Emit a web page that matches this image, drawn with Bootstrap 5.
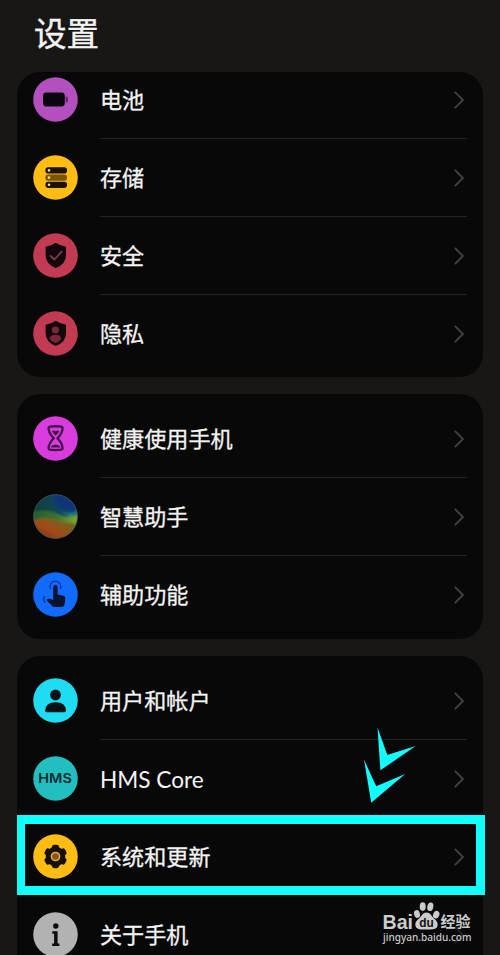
<!DOCTYPE html>
<html lang="zh-CN">
<head>
<meta charset="utf-8">
<meta name="viewport" content="width=device-width, initial-scale=1">
<title>设置</title>
<link href="https://cdn.jsdelivr.net/npm/bootstrap@5.3.0/dist/css/bootstrap.min.css" rel="stylesheet">
<style>
html, body { height: 955px; overflow: hidden; }
body { background: #181715; color: #f4f4f4; font-family: "Noto Sans CJK SC", sans-serif; }
.screen { height: 955px; overflow: hidden; padding: 0 17px; }
.page-title { height: 72px; padding: 8px 0 0 17px; font-size: 32.5px; line-height: 48px; font-weight: 400; -webkit-text-stroke: .4px; }
.panel { background: #080808; border-radius: 23px; overflow: hidden; margin-bottom: 17px; height: 245px; padding-top: 6px; }
.panel-cut { height: 305px; padding: 0; }
.panel-cut .entry:first-child { margin-top: -11px; }
.panel-last { height: 340px; border-radius: 23px 23px 0 0; overflow: visible; }
.entry { height: 78px; padding: 0 16px; color: inherit; }
.disc { width: 45px; height: 45px; flex: none; margin-bottom: 2px; }
.caption { margin-left: 22px; height: 100%; font-size: 22.1px; }
.caption span { padding-bottom: 2px; -webkit-text-stroke: .3px; }
.divided { border-bottom: 1px solid #222; padding-top: 1px; }
.arrow { width: 10px; height: 18px; margin-right: 3px; fill: none; stroke: #424242; stroke-width: 1.9; }
.target::after { content: ""; position: absolute; inset: -3px -2px 1px 0; border: 9px solid #12ffff; border-left-width: 8.5px; }
.pointer { position: absolute; left: 360px; top: 724px; }
.brand { position: absolute; left: 380px; top: 899px; }
.caption .latin { font-family: Lato, "Noto Sans CJK SC", sans-serif; font-size: 22.6px; padding-top: 1px; padding-bottom: 0; -webkit-text-stroke: 0; }
</style>
<script src="https://cdn.jsdelivr.net/npm/bootstrap@5.3.0/dist/js/bootstrap.bundle.min.js"></script>
</head>
<body>
<svg class="d-none"><symbol id="chev" viewBox="0 0 10 18"><path d="M.8.8 9 9 .8 17.2"/></symbol></svg>
<main class="screen position-relative">
<h1 class="page-title mb-0">设置</h1>

<section class="panel panel-cut">
  <div class="entry d-flex align-items-center">
    <svg class="disc" viewBox="0 0 45 45"><circle cx="22.5" cy="22.5" r="22.3" fill="#b44fc0"/><rect x="10" y="15.4" width="21.8" height="14" rx="3.4" fill="#0b060d"/><path d="M32.600 19.500h.8q1.500 0 1.500 1.500v3q0 1.500-1.500 1.500h-.8z" fill="#5e2a66"/></svg>
    <div class="caption divided d-flex flex-grow-1 align-items-center justify-content-between"><span>电池</span><svg class="arrow"><use href="#chev"/></svg></div>
  </div>
  <div class="entry d-flex align-items-center">
    <svg class="disc" viewBox="0 0 45 45"><circle cx="22.5" cy="22.5" r="22.3" fill="#ffbd13"/><g fill="#1b1205"><rect x="12.4" y="12.3" width="21.6" height="6.2" rx="2.8"/><rect x="12.4" y="19.5" width="21.6" height="6.2" rx="2.8" fill="#7c5309"/><rect x="12.4" y="26.7" width="21.6" height="6.2" rx="2.8"/></g><g fill="#ffd772"><circle cx="16" cy="15.4" r="1.3"/><circle cx="16" cy="22.6" r="1.3"/><circle cx="16" cy="29.8" r="1.3"/></g></svg>
    <div class="caption divided d-flex flex-grow-1 align-items-center justify-content-between"><span>存储</span><svg class="arrow"><use href="#chev"/></svg></div>
  </div>
  <div class="entry d-flex align-items-center">
    <svg class="disc" viewBox="0 0 45 45"><circle cx="22.5" cy="22.5" r="22.3" fill="#c23b52"/><path d="M22.800 9.800Q27.500 13 33 13.800v8.400q0 8.700-10.200 12.900Q12.600 30.900 12.600 22.200v-8.400Q18.100 13 22.800 9.800z" fill="#12070a"/><path d="m17 22.400 4.300 4.100 7.800-8.300" fill="none" stroke="#7c3a4c" stroke-width="1.800"/></svg>
    <div class="caption divided d-flex flex-grow-1 align-items-center justify-content-between"><span>安全</span><svg class="arrow"><use href="#chev"/></svg></div>
  </div>
  <div class="entry d-flex align-items-center">
    <svg class="disc" viewBox="0 0 45 45"><circle cx="22.5" cy="22.5" r="22.3" fill="#c23b52"/><path d="M22.800 9.800Q27.500 13 33 13.800v8.400q0 8.700-10.200 12.900Q12.600 30.900 12.600 22.200v-8.400Q18.100 13 22.800 9.800z" fill="#12070a"/><circle cx="22.400" cy="19" r="3.600" fill="#7a2637"/><path d="M16.600 28q0-4.300 5.800-4.300t5.800 4.300q-1.800 2.800-5.600 4.300-4-1.500-6-4.300z" fill="#7a2637"/></svg>
    <div class="caption d-flex flex-grow-1 align-items-center justify-content-between"><span>隐私</span><svg class="arrow"><use href="#chev"/></svg></div>
  </div>
</section>

<section class="panel">
  <div class="entry d-flex align-items-center">
    <svg class="disc" viewBox="0 0 45 45"><circle cx="22.500" cy="22.500" r="22.300" fill="#d93cdc"/><path d="M17 10.700Q22.500 9.800 28.200 10.700q2 .4 1.200 2.600-.4 4.200-4.900 8.900 4.500 4.700 4.900 8.900.8 2.200-1.200 2.600-5.700.9-11.200 0-2-.4-1.300-2.600.5-4.200 5-8.900-4.500-4.700-5-8.900-.7-2.200 1.300-2.600z" fill="none" stroke="#45104c" stroke-width="2.300"/><path d="M19 15.200q1.800-1.200 3.600 0 1.900-1.200 3.700 0-.8 2.400-3.700 4.200-2.800-1.800-3.600-4.200zM17.800 31.500q.5-2.600 4.800-3.100 4.300.5 4.900 3.100z" fill="#45104c"/></svg>
    <div class="caption divided d-flex flex-grow-1 align-items-center justify-content-between"><span>健康使用手机</span><svg class="arrow"><use href="#chev"/></svg></div>
  </div>
  <div class="entry d-flex align-items-center">
    <svg class="disc" viewBox="0 0 45 45"><defs><clipPath id="orb"><circle cx="22.500" cy="22.500" r="22"/></clipPath><linearGradient id="sky" x1="0" y1=".3" x2="1" y2=".1"><stop offset="0" stop-color="#123f35"/><stop offset=".5" stop-color="#104559"/><stop offset="1" stop-color="#16308a"/></linearGradient><linearGradient id="leaf" x1="0" x2="1"><stop offset="0" stop-color="#1b5b35"/><stop offset=".5" stop-color="#3c7130"/><stop offset="1" stop-color="#87b02c"/></linearGradient><linearGradient id="earth" x1="0" y1="1" x2="1" y2="0"><stop offset="0" stop-color="#6a2d15"/><stop offset=".45" stop-color="#a44a18"/><stop offset="1" stop-color="#557524"/></linearGradient><filter id="soft"><feGaussianBlur stdDeviation="1"/></filter></defs><g clip-path="url(#orb)"><rect width="45" height="45" fill="url(#sky)"/><g filter="url(#soft)"><path d="M18 0h30v13Q34 18 27 13 18 8 22 0z" fill="#103578"/><path d="M-2 19Q12 13 25 20t22-6v32H-2z" fill="url(#leaf)"/><path d="M-2 28Q10 21 23 26t24 3v18H-2z" fill="url(#earth)"/><path d="M25 16q10 6 22-1v6q-10 4-22-5z" fill="#167c75"/></g></g><circle cx="22.500" cy="22.500" r="21.900" fill="none" stroke="#456166" stroke-width=".7"/></svg>
    <div class="caption divided d-flex flex-grow-1 align-items-center justify-content-between"><span>智慧助手</span><svg class="arrow"><use href="#chev"/></svg></div>
  </div>
  <div class="entry d-flex align-items-center">
    <svg class="disc" viewBox="0 0 45 45"><circle cx="22.500" cy="22.500" r="22.300" fill="#126bff"/><path d="M20.200 15.300a2.200 2.200 0 0 1 4.400 0v7.200l6 1.300q2 .5 1.800 2.500l-.8 6q-.3 2.600-2.800 2.600h-7.200q-1.600 0-2.700-1.200l-5.600-5.800q1.800-2.400 4.300-1l2.600 1.200z" fill="#07142f"/><path d="M17.400 17a5.500 5.500 0 1 1 10 0M11.500 24.200q-2.300 3.200.8 6.700" fill="none" stroke="#0a338c" stroke-width="1.300"/></svg>
    <div class="caption d-flex flex-grow-1 align-items-center justify-content-between"><span>辅助功能</span><svg class="arrow"><use href="#chev"/></svg></div>
  </div>
</section>

<section class="panel panel-last">
  <div class="entry d-flex align-items-center">
    <svg class="disc" viewBox="0 0 45 45"><circle cx="22.500" cy="22.500" r="22.300" fill="#1fdcf2"/><circle cx="22.500" cy="17" r="5.400" fill="#071214"/><path d="M12.200 32.800q0-8.600 10.400-8.600t10.400 8.600q0 1.400-1.500 1.400H13.700q-1.500 0-1.500-1.400z" fill="#071214"/></svg>
    <div class="caption divided d-flex flex-grow-1 align-items-center justify-content-between"><span>用户和帐户</span><svg class="arrow"><use href="#chev"/></svg></div>
  </div>
  <div class="entry d-flex align-items-center">
    <svg class="disc" viewBox="0 0 45 45"><circle cx="22.500" cy="22.500" r="22.300" fill="#22bfc0"/><text x="5.300" y="27.200" font-family="Inter" font-weight="600" font-size="13" textLength="33.500" lengthAdjust="spacingAndGlyphs" fill="#072b30">HMS</text></svg>
    <div class="caption d-flex flex-grow-1 align-items-center justify-content-between"><span class="latin">HMS Core</span><svg class="arrow"><use href="#chev"/></svg></div>
  </div>
  <div class="entry target position-relative d-flex align-items-center">
    <svg class="disc" viewBox="0 0 45 45"><circle cx="22.500" cy="22.500" r="22.300" fill="#ffbd13"/><g fill="#171006"><circle cx="22.500" cy="22.500" r="9.800"/><rect x="18.900" y="10.800" width="7.200" height="23.400" rx="2.400"/><rect x="18.900" y="10.800" width="7.200" height="23.400" rx="2.400" transform="rotate(60 22.500 22.500)"/><rect x="18.900" y="10.800" width="7.200" height="23.400" rx="2.400" transform="rotate(120 22.500 22.500)"/></g><circle cx="22.500" cy="22.500" r="4.100" fill="#8c5412" stroke="#e8ad4a" stroke-width="1.500"/></svg>
    <div class="caption d-flex flex-grow-1 align-items-center justify-content-between"><span>系统和更新</span><svg class="arrow"><use href="#chev"/></svg></div>
  </div>
  <div class="entry d-flex align-items-center">
    <svg class="disc" viewBox="0 0 45 45"><circle cx="22.500" cy="22.500" r="22.300" fill="#b2b2b2"/><circle cx="22.800" cy="14" r="2.700" fill="#0c0c0c"/><path d="M19.300 19.300h5.300v12.200h1.800v2.400h-7.200v-2.400h1.900v-9.800h-1.800z" fill="#0c0c0c"/></svg>
    <div class="caption d-flex flex-grow-1 align-items-center justify-content-between"><span>关于手机</span><svg class="arrow opacity-50"><use href="#chev"/></svg></div>
  </div>
</section>

<svg class="pointer" width="60" height="82" viewBox="360 724 60 82" fill="#12ffff"><path d="m377.500 727.500 9.800 27.500 28.400-9-35.300 24.300zM364 759.500l12.200 26.800 29-12.300-34 28.800z"/></svg>
<svg class="brand" width="95" height="48" viewBox="380 899 95 48" fill="#cbcbcb">
  <text x="382.500" y="928.500" font-family="Liberation Sans" font-weight="700" font-size="20" textLength="30.500" lengthAdjust="spacingAndGlyphs">Bai</text>
  <ellipse cx="417" cy="914" rx="2.900" ry="3.900" transform="rotate(-15 417 914)"/><ellipse cx="422.700" cy="906.600" rx="3" ry="4.300"/><ellipse cx="430.300" cy="906.800" rx="3" ry="4.300" transform="rotate(12 430.300 906.800)"/><ellipse cx="436.200" cy="914.700" rx="3.100" ry="3.900" transform="rotate(20 436.200 914.700)"/>
  <path d="M426.500 912.500c4 0 4.700 3.300 7.500 5.900 3.400 3 4 5 3.500 7.300-.8 3.600-4.300 3.900-10.900 3.900-6.700 0-10.500-.2-11.200-4.200-.5-2.900.9-4.600 3.900-7.200 2.600-2.300 3.300-5.700 7.200-5.700z"/>
  <text x="419.300" y="927.200" font-family="Liberation Sans" font-weight="700" font-size="12.500" textLength="14.500" lengthAdjust="spacingAndGlyphs" fill="#111">du</text>
  <text x="440.500" y="927.300" font-family="Noto Sans CJK SC" font-weight="700" font-size="15" textLength="30" lengthAdjust="spacingAndGlyphs">经验</text>
  <text x="383" y="940.800" font-family="Noto Sans" font-size="10.300" textLength="88.500" lengthAdjust="spacingAndGlyphs" font-weight="500">jingyan.baidu.com</text>
</svg>
</main>
</body>
</html>
